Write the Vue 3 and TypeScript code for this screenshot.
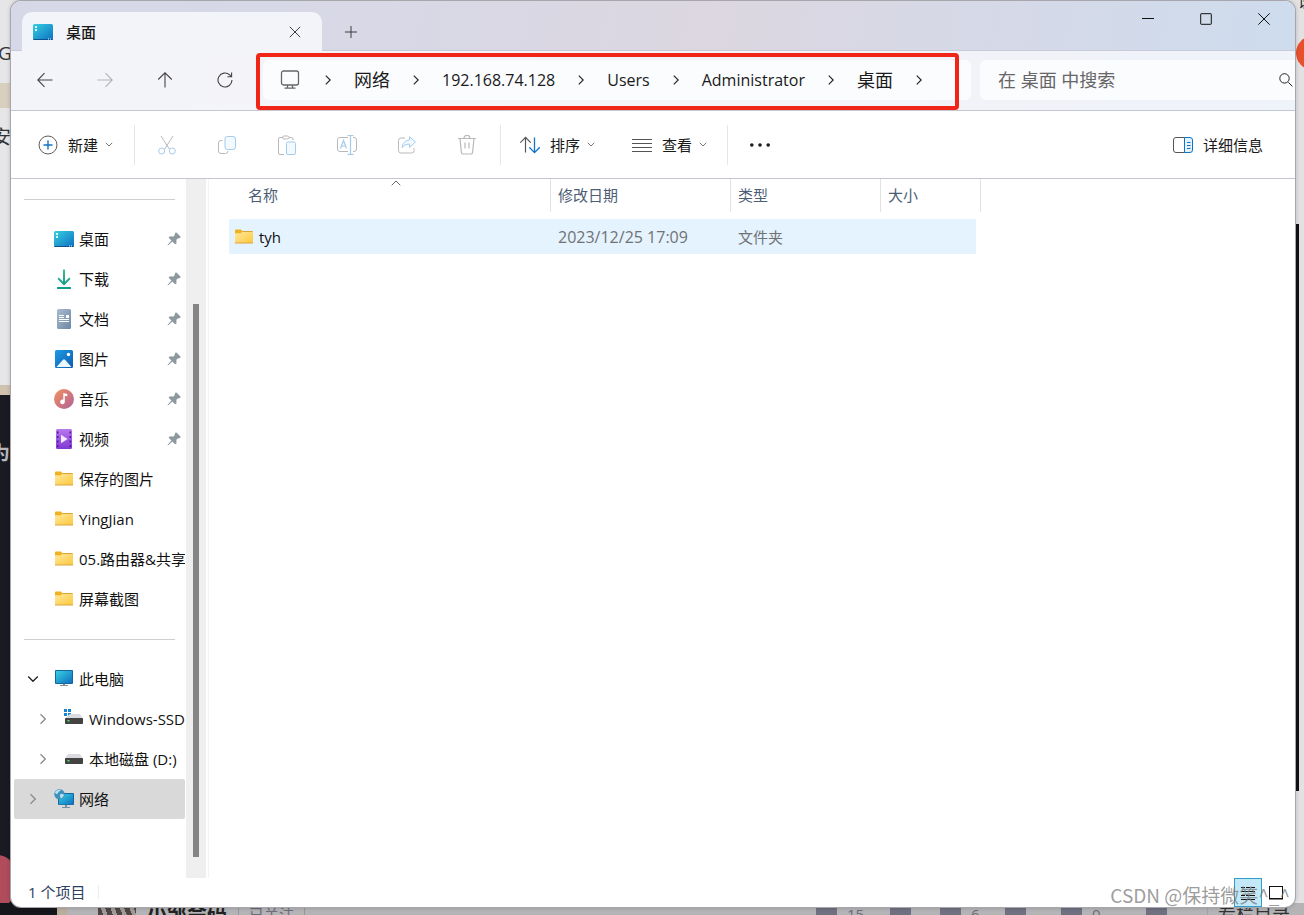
<script setup lang="ts">
import { ref } from 'vue'

type IconKind =
  | 'desktop' | 'download' | 'document' | 'picture' | 'music' | 'video'
  | 'folder' | 'pc' | 'system-drive' | 'drive' | 'network'

interface NavItem {
  label: string
  icon: IconKind
  pinned?: boolean
  level?: number
  expander?: 'open' | 'closed'
}

interface Crumb {
  label: string
  latin?: boolean
}

interface FileRow {
  name: string
  modified: string
  type: string
  size: string
}

const crumbs: Crumb[] = [
  { label: '网络' },
  { label: '192.168.74.128', latin: true },
  { label: 'Users', latin: true },
  { label: 'Administrator', latin: true },
  { label: '桌面' },
]

const quickAccess: NavItem[] = [
  { label: '桌面', icon: 'desktop', pinned: true },
  { label: '下载', icon: 'download', pinned: true },
  { label: '文档', icon: 'document', pinned: true },
  { label: '图片', icon: 'picture', pinned: true },
  { label: '音乐', icon: 'music', pinned: true },
  { label: '视频', icon: 'video', pinned: true },
  { label: '保存的图片', icon: 'folder' },
  { label: 'YingJian', icon: 'folder' },
  { label: '05.路由器&共享', icon: 'folder' },
  { label: '屏幕截图', icon: 'folder' },
]

const devices: NavItem[] = [
  { label: '此电脑', icon: 'pc', expander: 'open' },
  { label: 'Windows-SSD', icon: 'system-drive', expander: 'closed', level: 1 },
  { label: '本地磁盘 (D:)', icon: 'drive', expander: 'closed', level: 1 },
  { label: '网络', icon: 'network', expander: 'closed' },
]

const navGroups: NavItem[][] = [quickAccess, devices]
const selected = ref('网络')

const columns = ['名称', '修改日期', '类型', '大小']
const files: FileRow[] = [
  { name: 'tyh', modified: '2023/12/25 17:09', type: '文件夹', size: '' },
]

const stats = [
  { text: '15', width: 74 },
  { text: '', width: 50 },
  { text: '6', width: 65 },
  { text: '', width: 56 },
  { text: '0', width: 85 },
  { text: '', width: 61 },
]

const query = ref('')
</script>

<template>
  <div class="screen">
    <div class="backdrop" aria-hidden="true">
      <div class="left-edge">
        <span class="left-word g">G</span>
        <span class="left-seal"></span>
        <span class="left-word an">安</span>
        <span class="left-dark"></span>
        <span class="left-word wei">为</span>
        <span class="left-pink"></span>
      </div>
      <div class="right-edge">
        <span class="right-word">设</span>
        <span class="right-dot"></span>
        <span class="right-bar"></span>
      </div>
      <div class="bottom-edge">
        <span class="bottom-dark"></span>
        <span class="bottom-beige"></span>
        <span class="bottom-avatar"></span>
        <b class="author">小邹会码</b>
        <span class="follow">已关注</span>
        <span v-for="(s, i) in stats" :key="i" class="stat" :style="{ width: s.width + 'px' }">{{ s.text }}</span>
        <span class="catalog">专栏目录</span>
      </div>
    </div>

    <svg class="defs" aria-hidden="true">
      <defs>
        <linearGradient id="gFolder" x1="0" y1="0" x2="1" y2="1"><stop offset="0" stop-color="#ffe8a0" /><stop offset="1" stop-color="#fcc93c" /></linearGradient>
        <linearGradient id="gBlue" x1="0" y1="0" x2="1" y2="1"><stop offset="0" stop-color="#35d0e2" /><stop offset="1" stop-color="#0f6fc0" /></linearGradient>
        <linearGradient id="gDoc" x1="0" y1="0" x2="1" y2="1"><stop offset="0" stop-color="#a9bccf" /><stop offset="1" stop-color="#6c87a5" /></linearGradient>
        <linearGradient id="gPic" x1="0" y1="0" x2="1" y2="1"><stop offset="0" stop-color="#1f9be6" /><stop offset="1" stop-color="#0c5cae" /></linearGradient>
        <linearGradient id="gMusic" x1="0" y1="0" x2="1" y2="1"><stop offset="0" stop-color="#f2935a" /><stop offset="1" stop-color="#b0609c" /></linearGradient>
        <linearGradient id="gVideo" x1="0" y1="0" x2="0" y2="1"><stop offset="0" stop-color="#b877ee" /><stop offset="1" stop-color="#8238d4" /></linearGradient>
        <linearGradient id="gDown" x1="0" y1="0" x2="0" y2="1"><stop offset="0" stop-color="#3dc08c" /><stop offset="1" stop-color="#159a8c" /></linearGradient>
      </defs>
    </svg>

    <main class="window">
      <header class="titlebar">
        <div class="tab">
          <svg class="ico" viewBox="0 0 20 20"><rect x="0" y="2" width="20" height="16" rx="1.500" fill="url(#gBlue)" /><path d="M0 17h20a1.500 1.500 0 0 1-1.500 1h-17A1.500 1.500 0 0 1 0 17z" fill="#0c4f8c" /><path d="M2 4h2v2H2zM2 7h2v2H2zM15 16.500h1v1h-1zM17 16.500h1v1h-1z" fill="#dffaff" /></svg>
          <span class="tab-title">桌面</span>
          <button class="tab-close" aria-label="关闭标签页"><svg viewBox="0 0 12 12"><path d="M.8.8l10.400 10.400M11.200.8L.8 11.200" /></svg></button>
        </div>
        <button class="tab-add" aria-label="新标签页"><svg viewBox="0 0 12 12"><path d="M6 0v12M0 6h12" /></svg></button>
        <div class="caption">
          <button aria-label="最小化"><svg viewBox="0 0 12 12"><path d="M0 5.500h12" /></svg></button>
          <button aria-label="最大化"><svg viewBox="0 0 12 12"><rect x=".7" y=".7" width="10.600" height="10.600" rx=".5" /></svg></button>
          <button aria-label="关闭"><svg viewBox="0 0 12 12"><path d="M.3.3l11.400 11.400M11.700.3L.3 11.700" /></svg></button>
        </div>
      </header>

      <nav class="navbar" aria-label="地址栏">
        <button class="nav-btn" aria-label="后退"><svg viewBox="0 0 16 16"><path d="M15.500 8H1M7.500 1.200L.8 8l6.700 6.800" /></svg></button>
        <button class="nav-btn off" aria-label="前进" disabled><svg viewBox="0 0 16 16"><path d="M.5 8H15M8.500 1.200L15.200 8l-6.700 6.800" /></svg></button>
        <button class="nav-btn" aria-label="向上"><svg viewBox="0 0 16 16"><path d="M8 15.500V1M1.200 7.500L8 .8l6.800 6.700" /></svg></button>
        <button class="nav-btn" aria-label="刷新"><svg viewBox="0 0 16 16"><path d="M15 8a7 7 0 1 1-2.300-5.200L14.500 4.600M14.600.6v4.200h-4.200" /></svg></button>
        <div class="address">
          <svg class="monitor" viewBox="0 0 20 20"><path d="M3.500 1h13a2 2 0 0 1 2 2v10a2 2 0 0 1-2 2h-13a2 2 0 0 1-2-2V3a2 2 0 0 1 2-2zM7.500 15v3M12.500 15v3M4.500 18.200h11" /></svg>
          <span class="crumb-sep"><svg viewBox="0 0 6 10"><path d="M.8.6L5.200 5 .8 9.400" /></svg></span>
          <template v-for="c in crumbs" :key="c.label">
            <button class="crumb" :class="{ latin: c.latin }">{{ c.label }}</button>
            <span class="crumb-sep"><svg viewBox="0 0 6 10"><path d="M.8.6L5.200 5 .8 9.400" /></svg></span>
          </template>
          <span class="highlight"></span>
        </div>
        <label class="search">
          <input v-model="query" type="text" placeholder="在 桌面 中搜索" aria-label="搜索" />
          <svg viewBox="0 0 14 14"><path d="M9.300 9.300L13.400 13.400M10.200 5.400a4.700 4.700 0 1 1-9.400 0 4.700 4.700 0 0 1 9.400 0z" /></svg>
        </label>
      </nav>

      <div class="toolbar" role="toolbar">
        <button class="tool new">
          <svg class="ico" viewBox="0 0 20 20"><circle cx="10" cy="10" r="9" stroke="#5c5c5c" /><path d="M10 5.500v9M5.500 10h9" stroke="#1173c4" stroke-width="1.400" /></svg>
          <span>新建</span>
          <svg class="caret" viewBox="0 0 8 5"><path d="M.8.8L4 4 7.200.8" /></svg>
        </button>
        <span class="rule"></span>
        <button class="tool icon-only" aria-label="剪切" disabled><svg class="ico" viewBox="0 0 20 20"><path d="M4 1l8.300 13M16 1L7.700 14" stroke="#b9b9bb" /><circle cx="4.700" cy="16" r="3" stroke="#a5cbea" /><circle cx="15.300" cy="16" r="3" stroke="#a5cbea" /></svg></button>
        <button class="tool icon-only" aria-label="复制" disabled><svg class="ico" viewBox="0 0 20 20"><path d="M5.500 5.500H4A2.500 2.500 0 0 0 1.500 8v8A2.500 2.500 0 0 0 4 18.500h4.500a2.500 2.500 0 0 0 2.500-2.500" stroke="#b9b9bb" /><rect x="8" y="1.500" width="10.500" height="13" rx="2.500" stroke="#a5cbea" fill="#f2f9ff" /></svg></button>
        <button class="tool icon-only" aria-label="粘贴" disabled><svg class="ico" viewBox="0 0 20 20"><path d="M6 2.500H3A1.500 1.500 0 0 0 1.500 4v14A1.500 1.500 0 0 0 3 19.500h4M12 2.500h2.500A1.500 1.500 0 0 1 16 4v1" stroke="#b9b9bb" /><rect x="5.500" y="1" width="6.500" height="3" rx="1.500" stroke="#b9b9bb" /><rect x="9.500" y="7" width="9" height="12.500" rx="1.500" stroke="#a5cbea" fill="#f2f9ff" /></svg></button>
        <button class="tool icon-only" aria-label="重命名" disabled><svg class="ico" viewBox="0 0 20 20"><path d="M11 2.500H3A2.500 2.500 0 0 0 .5 5v9A2.500 2.500 0 0 0 3 16.500H11M16 2.500h1A2.500 2.500 0 0 1 19.500 5v9a2.500 2.500 0 0 1-2.500 2.500H16" stroke="#b9b9bb" /><path d="M13.500.5v18.500M10.500.5h6M10.500 19.300h6M3.500 13.500l3-8 3 8M4.500 11h4" stroke="#a5cbea" stroke-width="1.200" /></svg></button>
        <button class="tool icon-only" aria-label="共享" disabled><svg class="ico" viewBox="0 0 20 20"><path d="M8 3H4a2.500 2.500 0 0 0-2.500 2.500v10A2.500 2.500 0 0 0 4 18h10.500a2.500 2.500 0 0 0 2.500-2.500V13" stroke="#b9b9bb" /><path d="M12.500 1.800L18.500 7l-6 5.300V9.200C9 9 6.800 10.200 5.200 12.700c.2-4.300 2.800-7.300 7.300-7.700z" stroke="#a5cbea" fill="#f2f9ff" stroke-linejoin="round" /></svg></button>
        <button class="tool icon-only" aria-label="删除" disabled><svg class="ico" viewBox="0 0 20 20"><path d="M1 3.500h18M7 3.300a3 3 0 0 1 6 0M3 3.500l1.400 13.800a2 2 0 0 0 2 1.700h7.200a2 2 0 0 0 2-1.700L17 3.500M8 7.500v6M12 7.500v6" stroke="#b9b9bb" stroke-width="1.200" /></svg></button>
        <span class="rule after-icons"></span>
        <button class="tool sort">
          <svg class="ico" viewBox="0 0 20 20"><path d="M5.500 17.500V2.500M.3 7.700l5.200-5.400 5.200 5.400" stroke="#555" stroke-width="1.200" /><path d="M14.500 2.500v15M9.300 12.300l5.200 5.300 5.200-5.300" stroke="#1173c4" stroke-width="1.300" /></svg>
          <span>排序</span>
          <svg class="caret" viewBox="0 0 8 5"><path d="M.8.8L4 4 7.200.8" /></svg>
        </button>
        <button class="tool view">
          <svg class="ico" viewBox="0 0 20 20"><path d="M0 4.500h20M0 8.500h20M0 12.500h20M0 16.500h20" stroke="#555" stroke-width="1" /></svg>
          <span>查看</span>
          <svg class="caret" viewBox="0 0 8 5"><path d="M.8.8L4 4 7.200.8" /></svg>
        </button>
        <span class="rule"></span>
        <button class="tool icon-only" aria-label="更多"><svg class="ico" viewBox="0 0 20 20"><g fill="#1b1b1b"><circle cx="1.800" cy="10" r="1.800" /><circle cx="10" cy="10" r="1.800" /><circle cx="18.200" cy="10" r="1.800" /></g></svg></button>
        <button class="tool details">
          <svg class="ico" viewBox="0 0 20 20"><path d="M12 2.500H3A2.500 2.500 0 0 0 .5 5v10A2.500 2.500 0 0 0 3 17.500H12" stroke="#555" /><path d="M11.500 2.500H17A2.500 2.500 0 0 1 19.500 5v10a2.500 2.500 0 0 1-2.500 2.500H11.500z" stroke="#1173c4" fill="#e3f2fc" /><path d="M14 7.500h3.500M14 10.500h3.500M14 13.500h3.500" stroke="#1173c4" /></svg>
          <span>详细信息</span>
        </button>
      </div>

      <div class="body">
        <aside class="sidebar">
          <section v-for="(group, gi) in navGroups" :key="gi">
            <hr />
            <button
              v-for="item in group"
              :key="item.label"
              class="nav-item"
              :class="{ active: item.label === selected, nested: item.level === 1 }"
              @click="selected = item.label"
            >
              <span class="expander" :class="item.expander">
                <svg v-if="item.expander === 'open'" viewBox="0 0 12 12"><path d="M1.200 3.500L6 8.300l4.800-4.800" /></svg>
                <svg v-else-if="item.expander" viewBox="0 0 12 12"><path d="M3.500 1.200L8.300 6l-4.800 4.800" /></svg>
              </span>
              <svg class="ico" viewBox="0 0 20 20">
                <template v-if="item.icon === 'desktop'">
                  <rect x="0" y="2" width="20" height="16" rx="1.500" fill="url(#gBlue)" /><path d="M0 17h20a1.500 1.500 0 0 1-1.500 1h-17A1.500 1.500 0 0 1 0 17z" fill="#0c4f8c" /><path d="M2 4h2v2H2zM2 7h2v2H2zM15 16.500h1v1h-1zM17 16.500h1v1h-1z" fill="#dffaff" />
                </template>
                <template v-else-if="item.icon === 'download'">
                  <path d="M9 .5h2v12.300l4.200-4.200 1.300 1.300L10 16.400 3.500 9.900l1.300-1.300L9 12.800z" fill="url(#gDown)" /><rect x="3" y="18" width="14" height="2" rx=".5" fill="#169a8c" />
                </template>
                <template v-else-if="item.icon === 'document'">
                  <rect x="3" y="0" width="14" height="20" rx="1.500" fill="url(#gDoc)" /><path d="M5 6h5v1H5zM5 8h5v1H5zM12 6h3v3h-3zM5 10h10v1H5zM5 12h10v1H5z" fill="#fff" />
                </template>
                <template v-else-if="item.icon === 'picture'">
                  <rect x="1" y="1" width="18" height="18" rx="1.500" fill="url(#gPic)" /><path d="M2.500 18l6.500-7.200a1.300 1.300 0 0 1 2 0l6.500 7.200z" fill="#eaf7ff" /><circle cx="14.500" cy="5.500" r="1.700" fill="#fff" />
                </template>
                <template v-else-if="item.icon === 'music'">
                  <circle cx="10" cy="10" r="10" fill="url(#gMusic)" /><path d="M9.300 4l4 .9v2.300l-2.500-.5v6.100a2.300 2.300 0 1 1-1.500-2.100z" fill="#fff" />
                </template>
                <template v-else-if="item.icon === 'video'">
                  <rect x="2" y="0" width="16" height="20" rx="1.500" fill="url(#gVideo)" /><path d="M3 2.500h1.500v2H3zM3 7h1.500v2H3zM3 11.500h1.500v2H3zM3 16h1.500v2H3zM15.500 2.500H17v2h-1.500zM15.500 7H17v2h-1.500zM15.500 11.500H17v2h-1.500zM15.500 16H17v2h-1.500z" fill="#4d1b8e" /><path d="M7 5.800l6.600 4.200L7 14.200z" fill="#f3e9ff" />
                </template>
                <template v-else-if="item.icon === 'folder'">
                  <path d="M1 3.500A1 1 0 0 1 2 2.500h5l1.500 1.800V8H1z" fill="#f0b11f" /><path d="M8.300 4.500H18a1 1 0 0 1 1 1V16H1V6.200h6z" fill="url(#gFolder)" /><path d="M8.500 4H18a1 1 0 0 1 1 1H8zM1 15.500h18v1H1z" fill="#dda33b" />
                </template>
                <template v-else-if="item.icon === 'pc'">
                  <rect x="1" y="1" width="18" height="14" rx="1" fill="#16659f" /><rect x="2" y="2" width="16" height="12" fill="url(#gBlue)" /><path d="M9 15h2v2H9zM6 16h8v1H6z" fill="#7a8f9e" />
                </template>
                <template v-else-if="item.icon === 'system-drive'">
                  <path d="M0 0h3v3H0zM4 0h3v3H4zM0 4h3v3H0zM4 4h3v3H4z" fill="#1683d0" /><path d="M4 6.500l2-1.500h10l3 4.500H1z" fill="#d9dbe0" /><rect x="1" y="9" width="18" height="6" rx=".8" fill="#434343" /><rect x="3.500" y="11" width="2" height="1.500" fill="#4be35a" />
                </template>
                <template v-else-if="item.icon === 'drive'">
                  <path d="M4 5h12l3 4.500H1z" fill="#d9dbe0" /><rect x="1" y="9" width="18" height="6" rx=".8" fill="#434343" /><rect x="3.500" y="11" width="2" height="1.500" fill="#4be35a" />
                </template>
                <template v-else>
                  <rect x="4" y="4" width="16" height="12" rx="1" fill="#16659f" /><rect x="5" y="5" width="14" height="10.500" fill="url(#gBlue)" /><path d="M11 16h2v2h-2zM8 18h8v1H8z" fill="#7a8f9e" /><circle cx="5.500" cy="5.200" r="5.200" fill="#3f91bd" /><path d="M1 3.500C2.500 1 5 .2 7 .8c-.8 1.500-2.600 1.600-2.900 3C3.800 5.400 2.300 5.500 1 3.500zM6 5.500c1.500-.8 3-.6 4 .2-.4 1.800-1.600 3.200-3.300 3.800C6.800 8 5.500 7 6 5.500z" fill="#b7dfee" />
                </template>
              </svg>
              <span class="label">{{ item.label }}</span>
              <svg v-if="item.pinned" class="pin" viewBox="0 0 14 14"><path d="M8.300.8a1 1 0 0 1 1.400 0l3.500 3.500a1 1 0 0 1-.4 1.600l-2.400.9-1 1 .1 3.300a1 1 0 0 1-1.600.8L5.300 9.400 1.600 13.100.5 13.500.9 12.400 4.500 8.600 2.100 6.200a1 1 0 0 1 .7-1.700l3.600.1.900-.9z" /></svg>
            </button>
          </section>
        </aside>
        <div class="scrollbar"><span class="thumb"></span></div>
        <div class="content">
          <table>
            <colgroup><col class="c-name" /><col class="c-date" /><col class="c-type" /><col class="c-size" /></colgroup>
            <thead>
              <tr>
                <th v-for="(c, i) in columns" :key="c" scope="col">
                  <div class="head">
                    {{ c }}
                    <svg v-if="i === 0" class="sorted" viewBox="0 0 10 6"><path d="M.7 5.300L5 1l4.300 4.300" /></svg>
                  </div>
                </th>
              </tr>
            </thead>
            <tbody>
              <tr v-for="f in files" :key="f.name">
                <td>
                  <div class="file">
                    <svg class="ico" viewBox="0 0 20 20"><path d="M1 3.500A1 1 0 0 1 2 2.500h5l1.500 1.800V8H1z" fill="#f0b11f" /><path d="M8.300 4.500H18a1 1 0 0 1 1 1V16H1V6.200h6z" fill="url(#gFolder)" /><path d="M8.500 4H18a1 1 0 0 1 1 1H8zM1 15.500h18v1H1z" fill="#dda33b" /></svg>
                    <span>{{ f.name }}</span>
                  </div>
                </td>
                <td class="date">{{ f.modified }}</td>
                <td>{{ f.type }}</td>
                <td>{{ f.size }}</td>
              </tr>
            </tbody>
          </table>
        </div>
      </div>

      <footer class="status">
        <span class="count">{{ files.length }} 个项目</span>
        <div class="views">
          <button class="v on" aria-label="详细信息视图"><svg viewBox="0 0 16 16"><path d="M1 2.500h4M6 2.500h4M11 2.500h4M1 6.500h14M1 10.500h4M6 10.500h9M1 14.500h14" /></svg></button>
          <button class="v" aria-label="大图标视图"><svg viewBox="0 0 16 16"><rect x="1.500" y="1.500" width="13" height="12" /><path d="M1 14h14" /></svg></button>
        </div>
      </footer>
      <span class="watermark">CSDN @保持微笑^_^</span>
    </main>
  </div>
</template>

<style>
html,
body {
  margin: 0;
  overflow: hidden;
}
</style>

<style scoped>
.screen {
  position: relative;
  box-sizing: border-box;
  height: 100vh;
  padding: 1px 9px 8px 11px;
  overflow: hidden;
  background: #b9b9bb;
  color: #1a1a1a;
  font: 15px/20px "Open Sans", "Noto Sans CJK SC", sans-serif;
}
.screen * {
  box-sizing: border-box;
}
button {
  margin: 0;
  padding: 0;
  border: 0;
  background: none;
  color: inherit;
  font: inherit;
}
svg {
  display: block;
  flex: none;
  fill: none;
}
.defs {
  position: absolute;
  width: 0;
  height: 0;
}
.ico {
  width: 20px;
  height: 20px;
}

/* Page visible around the window */
.backdrop,
.backdrop > div,
.backdrop span {
  position: absolute;
}
.backdrop {
  inset: 0;
}
.left-edge {
  inset: 0 auto 0 0;
  width: 24px;
  overflow: hidden;
  background: #e6e6e8;
}
.left-word {
  left: -2px;
  font-size: 19px;
  color: #333;
}
.g {
  top: 43px;
}
.left-seal {
  top: 83px;
  width: 24px;
  height: 25px;
  background: #d8cfbf;
}
.an {
  top: 127px;
  left: -8px;
}
.left-dark {
  top: 385px;
  bottom: 0;
  width: 24px;
  border-top: 10px solid #cfc3b0;
  background: #1a1b22;
}
.wei {
  top: 443px;
  left: -9px;
  font-weight: 700;
  color: #b8b8bc;
}
.left-pink {
  bottom: 8px;
  left: -22px;
  width: 40px;
  height: 52px;
  border-radius: 50%;
  background: #b04c5c;
}
.right-edge {
  inset: 0 0 0 auto;
  width: 24px;
  overflow: hidden;
  background: #e2e2e4;
}
.right-word {
  top: -9px;
  left: 18px;
  color: #222;
}
.right-dot {
  top: 36px;
  left: 16px;
  width: 34px;
  height: 34px;
  border-radius: 50%;
  background: #e8502c;
}
.right-bar {
  top: 224px;
  left: 14px;
  width: 5px;
  height: 567px;
  background: #111;
}
.bottom-edge {
  right: 0;
  bottom: 0;
  left: 0;
  display: flex;
  height: 12px;
  overflow: hidden;
  padding-left: 147px;
  background: #b4b4b6;
  color: #6b6c7c;
  line-height: 22px;
}
.bottom-dark {
  left: 0;
  width: 57px;
  height: 12px;
  background: #15151c;
}
.bottom-beige {
  left: 57px;
  width: 10px;
  height: 12px;
  background: #b9ae9c;
}
.bottom-avatar {
  left: 98px;
  width: 38px;
  height: 12px;
  background: repeating-linear-gradient(70deg, #4c4646 0 5px, #a39a98 5px 9px);
}
.author {
  color: #222;
  font-size: 20px;
}
.bottom-edge .follow {
  position: static;
  margin-left: 11px;
  padding: 0 10px;
  border: solid #96969c;
  border-width: 0 1px;
}
.bottom-edge .stat {
  position: static;
  flex: none;
}
.bottom-edge .follow + .stat {
  margin-left: auto;
}
.stat::before {
  display: inline-block;
  width: 21px;
  height: 12px;
  margin-right: 10px;
  background: #6f7080;
  content: "";
  vertical-align: top;
}
.bottom-edge .catalog {
  position: static;
  flex: none;
  padding: 0 14px 0 10px;
  border-left: 1px solid #a2a2a6;
  color: #333;
  font-size: 18px;
}

/* Window frame */
.window {
  position: relative;
  display: flex;
  flex-direction: column;
  height: 100%;
  overflow: hidden;
  border-radius: 10px;
  background: #fff;
  box-shadow: 0 0 0 1px #a6a6ac, 0 0 5px #0004;
}
.titlebar {
  display: flex;
  flex: none;
  height: 50px;
  padding-left: 11px;
  border-bottom: 1px solid #c6cad9;
  background: linear-gradient(100deg, #d6d8e8 0, #d8d8e6 30%, #dcd7e1 55%, #d5d9e8 78%, #cedced 100%);
}
.tab {
  position: relative;
  display: flex;
  align-items: center;
  width: 300px;
  height: 39px;
  margin-top: 11px;
  padding: 0 21px 0 11px;
  border-radius: 10px 10px 0 0;
  background: #f3f4f9;
}
.tab-title {
  margin-left: 13px;
  font-weight: 500;
}
.tab-close {
  margin-left: auto;
}
.tab-close svg,
.tab-add svg,
.caption svg {
  width: 12px;
  height: 12px;
  stroke: #3c3c3c;
}
.tab-add {
  width: 58px;
  padding: 12px 23px 0;
}
.caption {
  display: flex;
  height: 36px;
  margin: 0 2px 0 auto;
}
.caption button {
  display: grid;
  width: 58px;
  place-items: center;
}
.caption svg {
  stroke: #111;
}

.navbar {
  display: flex;
  flex: none;
  height: 60px;
  padding: 9px 0 10px 4px;
  border-bottom: 1px solid #c3c8d3;
  background: linear-gradient(90deg, #f3f4f9, #f4f3f8 55%, #eff3fa);
}
.nav-btn {
  display: grid;
  flex: none;
  width: 60px;
  place-items: center;
}
.nav-btn svg {
  width: 16px;
  height: 16px;
  stroke: #444;
  stroke-width: 1.1;
}
.nav-btn.off svg {
  stroke: #b4b4b8;
}
.address {
  position: relative;
  display: flex;
  flex: 1;
  align-items: center;
  margin: 0 9px 0 8px;
  border-radius: 6px;
  background: #fbfcfe;
}
.monitor {
  width: 20px;
  height: 20px;
  margin: 0 2px 0 17px;
  stroke: #666;
  stroke-width: 1.3;
}
.crumb {
  font-size: 18px;
  line-height: 26px;
  white-space: nowrap;
}
.crumb.latin {
  font-size: 16px;
}
.crumb-sep {
  display: grid;
  flex: none;
  width: 52px;
  place-items: center;
}
.crumb-sep svg {
  width: 6px;
  height: 10px;
  stroke: #222;
  stroke-width: 1.2;
}
.highlight {
  position: absolute;
  inset: -7px 12px -10px -7px;
  border: 4px solid #f02518;
  border-radius: 4px;
  pointer-events: none;
}
.search {
  display: flex;
  flex: none;
  align-items: center;
  width: 315px;
  padding: 0 2px 0 18px;
  border-radius: 6px 0 0 6px;
  background: #fbfcfe;
}
.search input {
  flex: 1;
  min-width: 0;
  padding: 0;
  border: 0;
  outline: 0;
  background: none;
  color: #333;
  font: inherit;
  font-size: 18px;
}
.search input::placeholder {
  color: #666;
  opacity: 1;
}
.search svg {
  width: 14px;
  height: 14px;
  stroke: #222;
}

.toolbar {
  display: flex;
  flex: none;
  align-items: center;
  height: 68px;
  border-bottom: 1px solid #c3c6d1;
}
.tool {
  display: flex;
  flex: none;
  align-items: center;
  gap: 10px;
  height: 40px;
}
.tool.icon-only {
  width: 60px;
  justify-content: center;
}
.tool .caret {
  width: 8px;
  height: 5px;
  margin-left: -3px;
  stroke: #777;
}
.tool.new {
  margin: 0 21px 0 27px;
}
.tool.sort {
  margin: 0 37px 0 19px;
}
.tool.view {
  margin-right: 20px;
}
.tool.details {
  margin: 0 32px 0 auto;
}
.rule {
  width: 1px;
  height: 40px;
  margin-right: 2px;
  background: #e6e6e8;
}
.rule.after-icons {
  margin: 0 0 0 3px;
}

.body {
  display: flex;
  flex: 1;
  min-height: 0;
}
.sidebar {
  flex: none;
  width: 175px;
  overflow: hidden;
}
.sidebar hr {
  height: 1px;
  margin: 20px 11px 19px 13px;
  border: 0;
  background: #cfcfd1;
}
.nav-item {
  display: flex;
  align-items: center;
  width: 171px;
  height: 40px;
  margin-left: 3px;
  padding-left: 12px;
  overflow: hidden;
  border-radius: 2px;
  color: #111;
  text-align: left;
}
.nav-item.nested {
  padding-left: 22px;
}
.nav-item.active {
  background: #d9d9d9;
}
.expander {
  flex: none;
  width: 28px;
}
.expander svg {
  width: 12px;
  height: 12px;
  margin-left: 1px;
  stroke: #8a8a8a;
  stroke-width: 1.3;
}
.expander.open svg {
  stroke: #222;
}
.label {
  flex: 1;
  margin-left: 5px;
  white-space: nowrap;
}
.pin {
  width: 14px;
  height: 14px;
  margin-right: 4px;
  fill: #8d989f;
}
.scrollbar {
  flex: none;
  width: 20px;
  padding: 125px 7px 21px;
  background: #efefef;
}
.thumb {
  display: block;
  height: 100%;
  background: #858585;
}
.content {
  flex: 1;
  min-width: 0;
  margin-left: 2px;
  padding-left: 20px;
  border-left: 1px solid #f3f3f3;
}

table {
  width: 752px;
  border-spacing: 0;
  table-layout: fixed;
}
.c-name {
  width: 322px;
}
.c-date {
  width: 180px;
}
.c-type {
  width: 150px;
}
.c-size {
  width: 100px;
}
th {
  padding: 0 0 7px;
  color: #4d5d75;
  font-weight: 400;
  text-align: left;
}
.head {
  position: relative;
  height: 33px;
  padding-left: 7px;
  border-right: 1px solid #e2e2e4;
  line-height: 33px;
}
th:first-child .head {
  margin-left: 12px;
}
.sorted {
  position: absolute;
  top: 1px;
  left: 50%;
  width: 10px;
  height: 6px;
  margin-left: -5px;
  stroke: #666;
}
td {
  height: 35px;
  padding: 0 0 0 7px;
  background: #e5f3fe;
  color: #707274;
}
td:first-child {
  padding-left: 5px;
  border-radius: 2px 0 0 2px;
  color: #111;
}
td:last-child {
  border-right: 5px solid transparent;
  background-clip: padding-box;
}
td.date {
  font-size: 16px;
}
.file {
  display: flex;
  align-items: center;
  gap: 5px;
}

.status {
  display: flex;
  flex: none;
  height: 29px;
  padding: 0 8px 0 17px;
}
.count {
  height: 14px;
  margin-top: 7px;
  padding-right: 13px;
  border-right: 1px solid #ececec;
  color: #2d3f60;
  line-height: 14px;
}
.views {
  display: flex;
  gap: 3px;
  margin-left: auto;
}
.v {
  display: grid;
  width: 22px;
  place-items: center;
}
.v.on {
  width: 28px;
  border: 1px solid #2f9fc8;
  background: #c3e9f8;
}
.v svg {
  width: 16px;
  height: 16px;
  stroke: #111;
}
.watermark {
  position: absolute;
  right: 5px;
  bottom: 0;
  color: #777b;
  font-family: "Noto Sans CJK SC", sans-serif;
  font-size: 19px;
  line-height: 24px;
  pointer-events: none;
}
</style>
